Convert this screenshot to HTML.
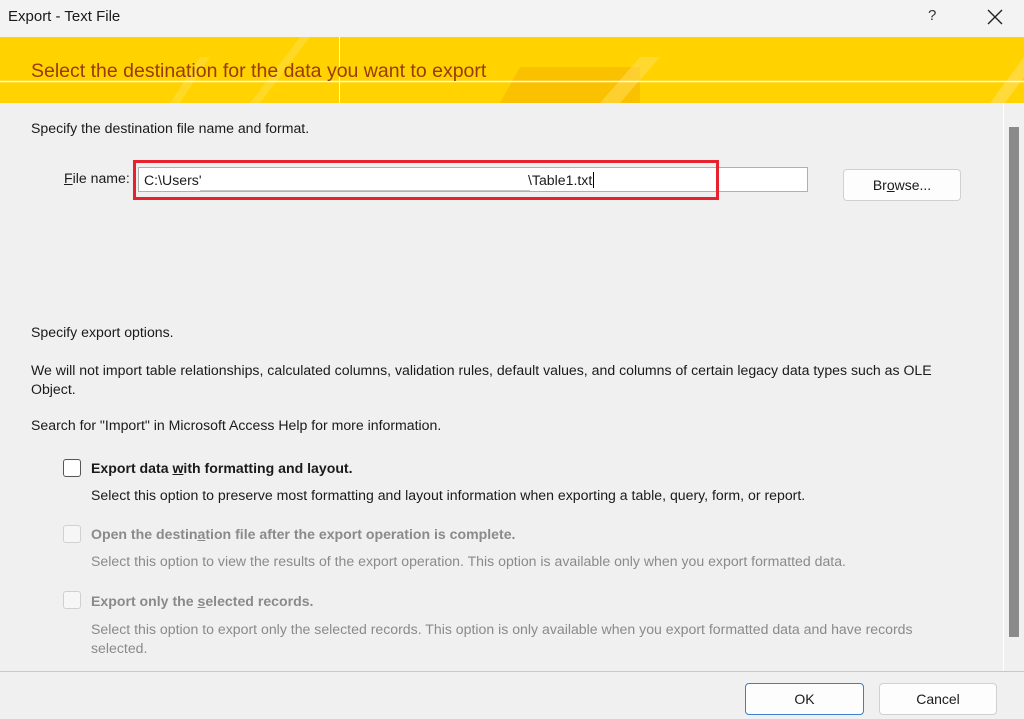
<!DOCTYPE html>
<html><head><style>
*{margin:0;padding:0;box-sizing:border-box}
body{width:1024px;height:719px;overflow:hidden;background:#f0f0f0;font-family:"Liberation Sans",sans-serif;font-size:14.1px;color:#1a1a1a;position:relative}
.a{position:absolute;white-space:nowrap}
.g{color:#8a8a8a}
.cb{position:absolute;left:63px;width:18px;height:18px;border:1px solid #555;border-radius:3px;background:#fff}
.cb.d{border-color:#d0d0d0;background:#f6f6f6}
.btn{position:absolute;height:32px;border:1px solid #d0d0d0;border-radius:4px;background:#fdfdfd;text-align:center;line-height:30px;font-size:14px}
</style></head><body>
<div class="a" style="left:0;top:0;width:1024px;height:37px;background:#f3f3f3"></div>
<div class="a" style="left:8px;top:8px;font-size:15px">Export - Text File</div>
<div class="a" style="left:928px;top:7px;font-size:15px;color:#333">?</div>
<svg class="a" style="left:987px;top:9px" width="16" height="16"><path d="M1 1L15 15M15 1L1 15" stroke="#222" stroke-width="1.4"/></svg>
<svg class="a" style="left:0;top:37px" width="1024" height="66">
<rect width="1024" height="66" fill="#ffd200"/>
<polygon points="170,66 200,20 210,20 180,66" fill="#ffe04a" opacity=".5"/>
<polygon points="250,66 300,0 310,0 260,66" fill="#ffe04a" opacity=".5"/>
<polygon points="500,66 520,30 640,30 640,66" fill="#f5b000" opacity=".5"/>
<polygon points="600,66 640,20 660,20 620,66" fill="#ffe060" opacity=".5"/>
<polygon points="990,66 1024,20 1024,40 1005,66" fill="#ffe060" opacity=".6"/>
<line x1="0" y1="44.5" x2="1024" y2="44.5" stroke="#fff" stroke-width="1.5" opacity=".9"/>
<line x1="339.5" y1="0" x2="339.5" y2="66" stroke="#fff" stroke-width="1"/>
</svg>
<div class="a" style="left:31px;top:60px;font-size:19.5px;color:#9a3a0a">Select the destination for the data you want to export</div>
<div class="a" style="left:1003px;top:103px;width:1px;height:568px;background:#fff"></div>
<div class="a" style="left:1009px;top:127px;width:10px;height:510px;background:#8a8a8a"></div>
<div class="a" style="left:31px;top:120px">Specify the destination file name and format.</div>
<div class="a" style="left:64px;top:170px"><u>F</u>ile name:</div>
<div class="a" style="left:138px;top:167px;width:670px;height:25px;background:#fff;border:1px solid #b0b0b0"></div>
<div class="a" style="left:200px;top:190px;width:330px;height:1px;background:#c8c8c8"></div>
<div class="a" style="left:144px;top:172px">C:\Users'</div>
<div class="a" style="left:528px;top:172px">\Table1.txt<span style="border-left:1px solid #000;margin-left:1px"></span></div>
<div class="a" style="left:133px;top:160px;width:586px;height:40px;border:3px solid #e8212e"></div>
<div class="btn" style="left:843px;top:169px;width:118px">Br<u>o</u>wse...</div>
<div class="a" style="left:31px;top:324px">Specify export options.</div>
<div class="a" style="left:31px;top:361px;line-height:19px;white-space:normal;width:940px">We will not import table relationships, calculated columns, validation rules, default values, and columns of certain legacy data types such as OLE Object.</div>
<div class="a" style="left:31px;top:417px">Search for "Import" in Microsoft Access Help for more information.</div>
<div class="cb" style="top:459px"></div>
<div class="a" style="left:91px;top:460px;font-weight:bold">Export data <u>w</u>ith formatting and layout.</div>
<div class="a" style="left:91px;top:487px">Select this option to preserve most formatting and layout information when exporting a table, query, form, or report.</div>
<div class="cb d" style="top:525px"></div>
<div class="a g" style="left:91px;top:526px;font-weight:bold">Open the destin<u>a</u>tion file after the export operation is complete.</div>
<div class="a g" style="left:91px;top:553px">Select this option to view the results of the export operation. This option is available only when you export formatted data.</div>
<div class="cb d" style="top:591px"></div>
<div class="a g" style="left:91px;top:593px;font-weight:bold">Export only the <u>s</u>elected records.</div>
<div class="a g" style="left:91px;top:620px;line-height:19px;white-space:normal;width:830px">Select this option to export only the selected records. This option is only available when you export formatted data and have records selected.</div>
<div class="a" style="left:0;top:671px;width:1024px;height:1px;background:#c8c8c8"></div>
<div class="btn" style="left:745px;top:683px;width:119px;border-color:#3a7fd0">OK</div>
<div class="btn" style="left:879px;top:683px;width:118px">Cancel</div>
</body></html>
